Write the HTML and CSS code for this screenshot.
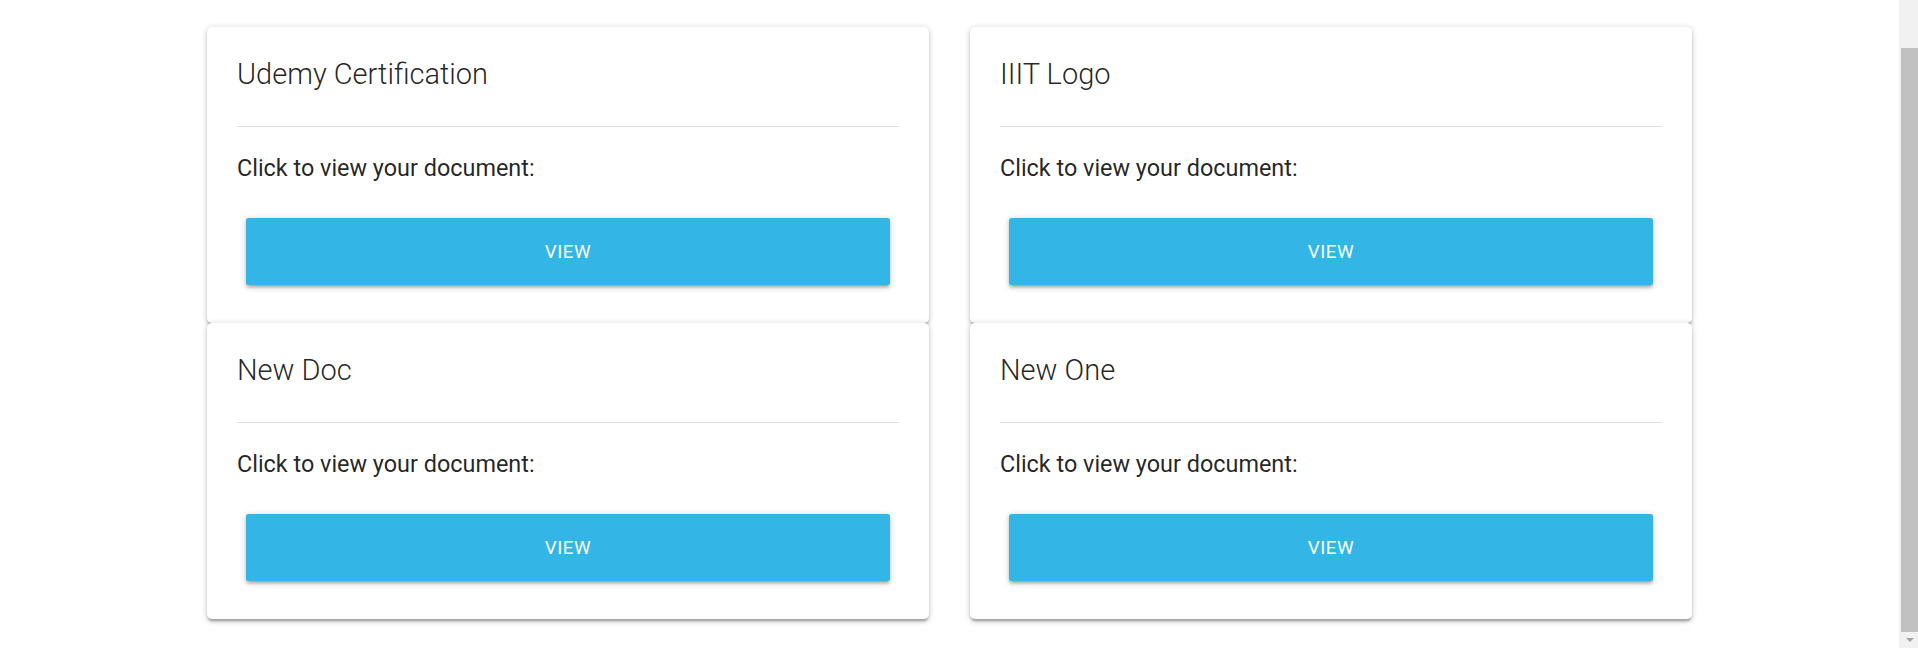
FILE: index.html
```html
<!DOCTYPE html>
<html lang="en">
<head>
<meta charset="utf-8">
<title>Documents</title>
<link rel="stylesheet" href="styles.css">
</head>
<body>
<div class="viewport">
  <main class="docs">
    <section class="card">
      <h2 class="card-title">Udemy Certification</h2>
      <hr class="divider">
      <p class="card-text">Click to view your document:</p>
      <a class="btn" href="#">View</a>
    </section>
    <section class="card">
      <h2 class="card-title">IIIT Logo</h2>
      <hr class="divider">
      <p class="card-text">Click to view your document:</p>
      <a class="btn" href="#">View</a>
    </section>
    <section class="card">
      <h2 class="card-title">New Doc</h2>
      <hr class="divider">
      <p class="card-text">Click to view your document:</p>
      <a class="btn" href="#">View</a>
    </section>
    <section class="card">
      <h2 class="card-title">New One</h2>
      <hr class="divider">
      <p class="card-text">Click to view your document:</p>
      <a class="btn" href="#">View</a>
    </section>
  </main>
</div>
<div class="scrollbar" aria-hidden="true">
  <div class="scroll-track-top"></div>
  <div class="scroll-thumb"></div>
  <div class="scroll-arrow"></div>
</div>
</body>
</html>
```
FILE: styles.css
```css
html, body {
  height: 100%;
}
body {
  margin: 0;
  background: #fff;
  font-family: Roboto, "Liberation Sans", Arial, sans-serif;
  color: rgba(0, 0, 0, 0.87);
  display: flex;
  overflow: hidden;
}
.viewport {
  flex: 1;
  min-width: 0;
}
.docs {
  width: 1485px;
  margin: 0 auto;
  padding: 27px 0 29px;
  display: grid;
  grid-template-columns: 1fr 1fr;
  column-gap: 41px;
}
.card {
  background: #fff;
  border-radius: 5px;
  padding: 29px 30px 30px;
  display: flex;
  flex-direction: column;
  box-shadow: 0 2.5px 2.5px 0 rgba(0,0,0,.14), 0 3.75px 1.25px -2.5px rgba(0,0,0,.12), 0 1.25px 6.25px 0 rgba(0,0,0,.2);
}
.card-title {
  margin: 0;
  font-size: 29px;
  font-weight: 300;
  line-height: 36px;
  color: rgba(0, 0, 0, 0.87);
}
.divider {
  margin: 34px 0 28px;
  border: 0;
  height: 1px;
  background: #e0e0e0;
}
.card-text {
  margin: 0;
  font-size: 23.4px;
  line-height: 26px;
}
.btn {
  margin: 37px 9px 8px;
  height: 67px;
  display: flex;
  align-items: center;
  justify-content: center;
  background: #33b5e5;
  color: #fff;
  text-decoration: none;
  text-transform: uppercase;
  font-size: 18.75px;
  letter-spacing: 0.6px;
  border-radius: 2.5px;
  box-shadow: 0 2.5px 2.5px 0 rgba(0,0,0,.14), 0 3.75px 1.25px -2.5px rgba(0,0,0,.12), 0 1.25px 6.25px 0 rgba(0,0,0,.2);
}
.scrollbar {
  width: 19px;
  flex: none;
  height: 100%;
  box-sizing: border-box;
  padding-left: 2px;
  background: #f1f1f1;
  display: flex;
  flex-direction: column;
}
.scroll-track-top {
  height: 48px;
  flex: none;
}
.scroll-thumb {
  height: 584px;
  flex: none;
  background: #c1c1c1;
}
.scroll-arrow {
  flex: 1;
  display: flex;
  justify-content: center;
  align-items: center;
}
.scroll-arrow::before {
  content: "";
  width: 0;
  height: 0;
  border-left: 4px solid transparent;
  border-right: 4px solid transparent;
  border-top: 4px solid #a3a3a3;
}
```
